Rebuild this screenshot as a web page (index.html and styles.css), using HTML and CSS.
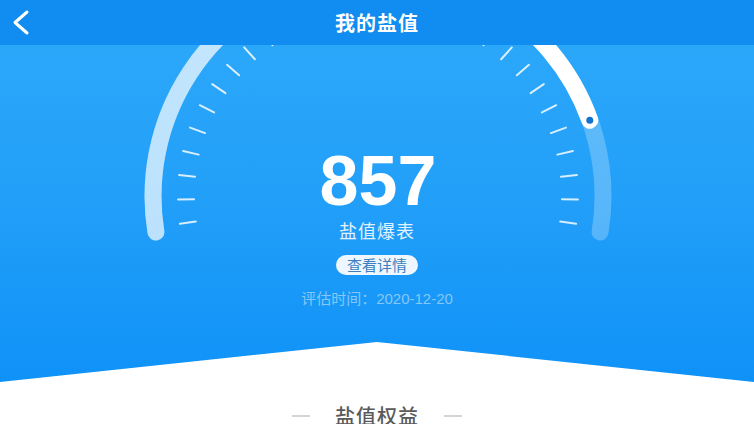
FILE: index.html
```html
<!DOCTYPE html>
<html lang="zh-CN">
<head>
<meta charset="utf-8">
<title>我的盐值</title>
<link rel="stylesheet" href="styles.css">
</head>
<body>
<div class="page">
  <header class="topbar">
    <svg class="back" width="40" height="45" viewBox="0 0 40 45" aria-label="返回">
      <polyline points="27,7 15,17.5 27,28" fill="none" stroke="#fff" stroke-width="3" stroke-linecap="round" stroke-linejoin="round"/>
    </svg>
    <h1 class="title">我的盐值</h1>
    <span class="spacer"></span>
  </header>

  <section class="hero">
    <svg class="gauge" width="754" height="337" viewBox="0 0 754 337" aria-hidden="true">
      <defs>
        <linearGradient id="prog" gradientUnits="userSpaceOnUse" x1="155" y1="0" x2="590" y2="0">
          <stop offset="0" stop-color="#fff" stop-opacity="0.6"/>
          <stop offset="0.45" stop-color="#fff" stop-opacity="0.68"/>
          <stop offset="0.78" stop-color="#fff" stop-opacity="1"/>
          <stop offset="1" stop-color="#fff" stop-opacity="1"/>
        </linearGradient>
      </defs>
      <path d="M155.9 187 A225 225 0 1 1 600.1 187" fill="none" stroke="#fff" stroke-opacity="0.25" stroke-width="17" stroke-linecap="round"/>
      <path d="M155.9 187 A225 225 0 0 1 589.8 75.2" fill="none" stroke="url(#prog)" stroke-width="17" stroke-linecap="round"/>
      <circle cx="589.8" cy="75.2" r="3.5" fill="#1671cc"/>
      <g class="ticks" stroke="#fff" stroke-opacity="0.82" stroke-width="2" stroke-linecap="round">
        <line x1="178" y1="151" x2="194" y2="151" transform="rotate(-8 378 151)"/>
        <line x1="178" y1="151" x2="194" y2="151" transform="rotate(-1 378 151)"/>
        <line x1="178" y1="151" x2="194" y2="151" transform="rotate(6 378 151)"/>
        <line x1="178" y1="151" x2="194" y2="151" transform="rotate(13 378 151)"/>
        <line x1="178" y1="151" x2="194" y2="151" transform="rotate(20 378 151)"/>
        <line x1="178" y1="151" x2="194" y2="151" transform="rotate(27 378 151)"/>
        <line x1="178" y1="151" x2="194" y2="151" transform="rotate(34 378 151)"/>
        <line x1="178" y1="151" x2="194" y2="151" transform="rotate(41 378 151)"/>
        <line x1="178" y1="151" x2="194" y2="151" transform="rotate(48 378 151)"/>
        <line x1="178" y1="151" x2="194" y2="151" transform="rotate(55 378 151)"/>
        <line x1="178" y1="151" x2="194" y2="151" transform="rotate(62 378 151)"/>
        <line x1="178" y1="151" x2="194" y2="151" transform="rotate(69 378 151)"/>
        <line x1="178" y1="151" x2="194" y2="151" transform="rotate(76 378 151)"/>
        <line x1="178" y1="151" x2="194" y2="151" transform="rotate(83 378 151)"/>
        <line x1="178" y1="151" x2="194" y2="151" transform="rotate(90 378 151)"/>
        <line x1="178" y1="151" x2="194" y2="151" transform="rotate(97 378 151)"/>
        <line x1="178" y1="151" x2="194" y2="151" transform="rotate(104 378 151)"/>
        <line x1="178" y1="151" x2="194" y2="151" transform="rotate(111 378 151)"/>
        <line x1="178" y1="151" x2="194" y2="151" transform="rotate(118 378 151)"/>
        <line x1="178" y1="151" x2="194" y2="151" transform="rotate(125 378 151)"/>
        <line x1="178" y1="151" x2="194" y2="151" transform="rotate(132 378 151)"/>
        <line x1="178" y1="151" x2="194" y2="151" transform="rotate(139 378 151)"/>
        <line x1="178" y1="151" x2="194" y2="151" transform="rotate(146 378 151)"/>
        <line x1="178" y1="151" x2="194" y2="151" transform="rotate(153 378 151)"/>
        <line x1="178" y1="151" x2="194" y2="151" transform="rotate(160 378 151)"/>
        <line x1="178" y1="151" x2="194" y2="151" transform="rotate(167 378 151)"/>
        <line x1="178" y1="151" x2="194" y2="151" transform="rotate(174 378 151)"/>
        <line x1="178" y1="151" x2="194" y2="151" transform="rotate(181 378 151)"/>
        <line x1="178" y1="151" x2="194" y2="151" transform="rotate(188 378 151)"/>
      </g>
    </svg>
    <div class="score-block">
      <div class="score">857</div>
      <div class="level">盐值爆表</div>
      <button class="detail-btn" type="button">查看详情</button>
      <div class="eval-time">评估时间：2020-12-20</div>
    </div>
  </section>

  <section class="rights">
    <div class="section-title">
      <span class="dash"></span>
      <h2 class="section-text">盐值权益</h2>
      <span class="dash"></span>
    </div>
  </section>
</div>
</body>
</html>
```

FILE: styles.css
```css
* {
  box-sizing: border-box;
}

html, body {
  margin: 0;
  padding: 0;
  background: #ffffff;
}

body {
  font-family: "Liberation Sans", "Noto Sans CJK SC", sans-serif;
}

.page {
  width: 754px;
  height: 424px;
  overflow: hidden;
  background: #ffffff;
}

.topbar {
  height: 45px;
  background: #118cf0;
  display: grid;
  grid-template-columns: 40px 1fr 40px;
  align-items: center;
  position: relative;
  z-index: 2;
}

.back {
  display: block;
}

.title {
  margin: 0;
  text-align: center;
  color: #ffffff;
  font-size: 20px;
  font-weight: 700;
  line-height: 45px;
  letter-spacing: 1px;
  padding-bottom: 10px;
  font-family: "Noto Sans CJK SC", sans-serif;
}

.hero {
  position: relative;
  height: 337px;
  background: linear-gradient(180deg, #2ba7fa 0%, #229ff8 45%, #0f92f8 100%);
  clip-path: polygon(0 0, 100% 0, 100% 100%, 50% 297px, 0 100%);
  overflow: hidden;
}

.gauge {
  position: absolute;
  left: 0;
  top: 0;
}

.score-block {
  position: relative;
  display: flex;
  flex-direction: column;
  align-items: center;
  padding-top: 106px;
  color: #ffffff;
}

.score {
  font-family: "Liberation Sans", sans-serif;
  font-weight: 700;
  font-size: 70px;
  line-height: 60px;
  padding-left: 2px;
}

.level {
  margin-top: 7px;
  font-family: "Noto Sans CJK SC", sans-serif;
  font-size: 18px;
  line-height: 24px;
  letter-spacing: 1px;
  color: #e2f2ff;
}

.detail-btn {
  margin-top: 13px;
  height: 20px;
  padding: 0 11px;
  border: none;
  border-radius: 10px;
  background: #eef7ff;
  color: #3d7fbd;
  font-family: "Noto Sans CJK SC", sans-serif;
  font-size: 15px;
  line-height: 20px;
  cursor: pointer;
}

.eval-time {
  margin-top: 15px;
  font-family: "Liberation Sans", "Noto Sans CJK SC", sans-serif;
  font-size: 15px;
  line-height: 18px;
  color: #84c7f8;
}

.rights {
  padding-top: 20px;
}

.section-title {
  display: flex;
  justify-content: center;
  align-items: center;
  gap: 25px;
}

.section-text {
  margin: 0;
  font-family: "Noto Sans CJK SC", sans-serif;
  font-weight: 500;
  font-size: 20px;
  line-height: 28px;
  color: #5a5a5a;
  letter-spacing: 1px;
}

.dash {
  width: 18px;
  height: 2px;
  background: #d4d4d4;
}
```
